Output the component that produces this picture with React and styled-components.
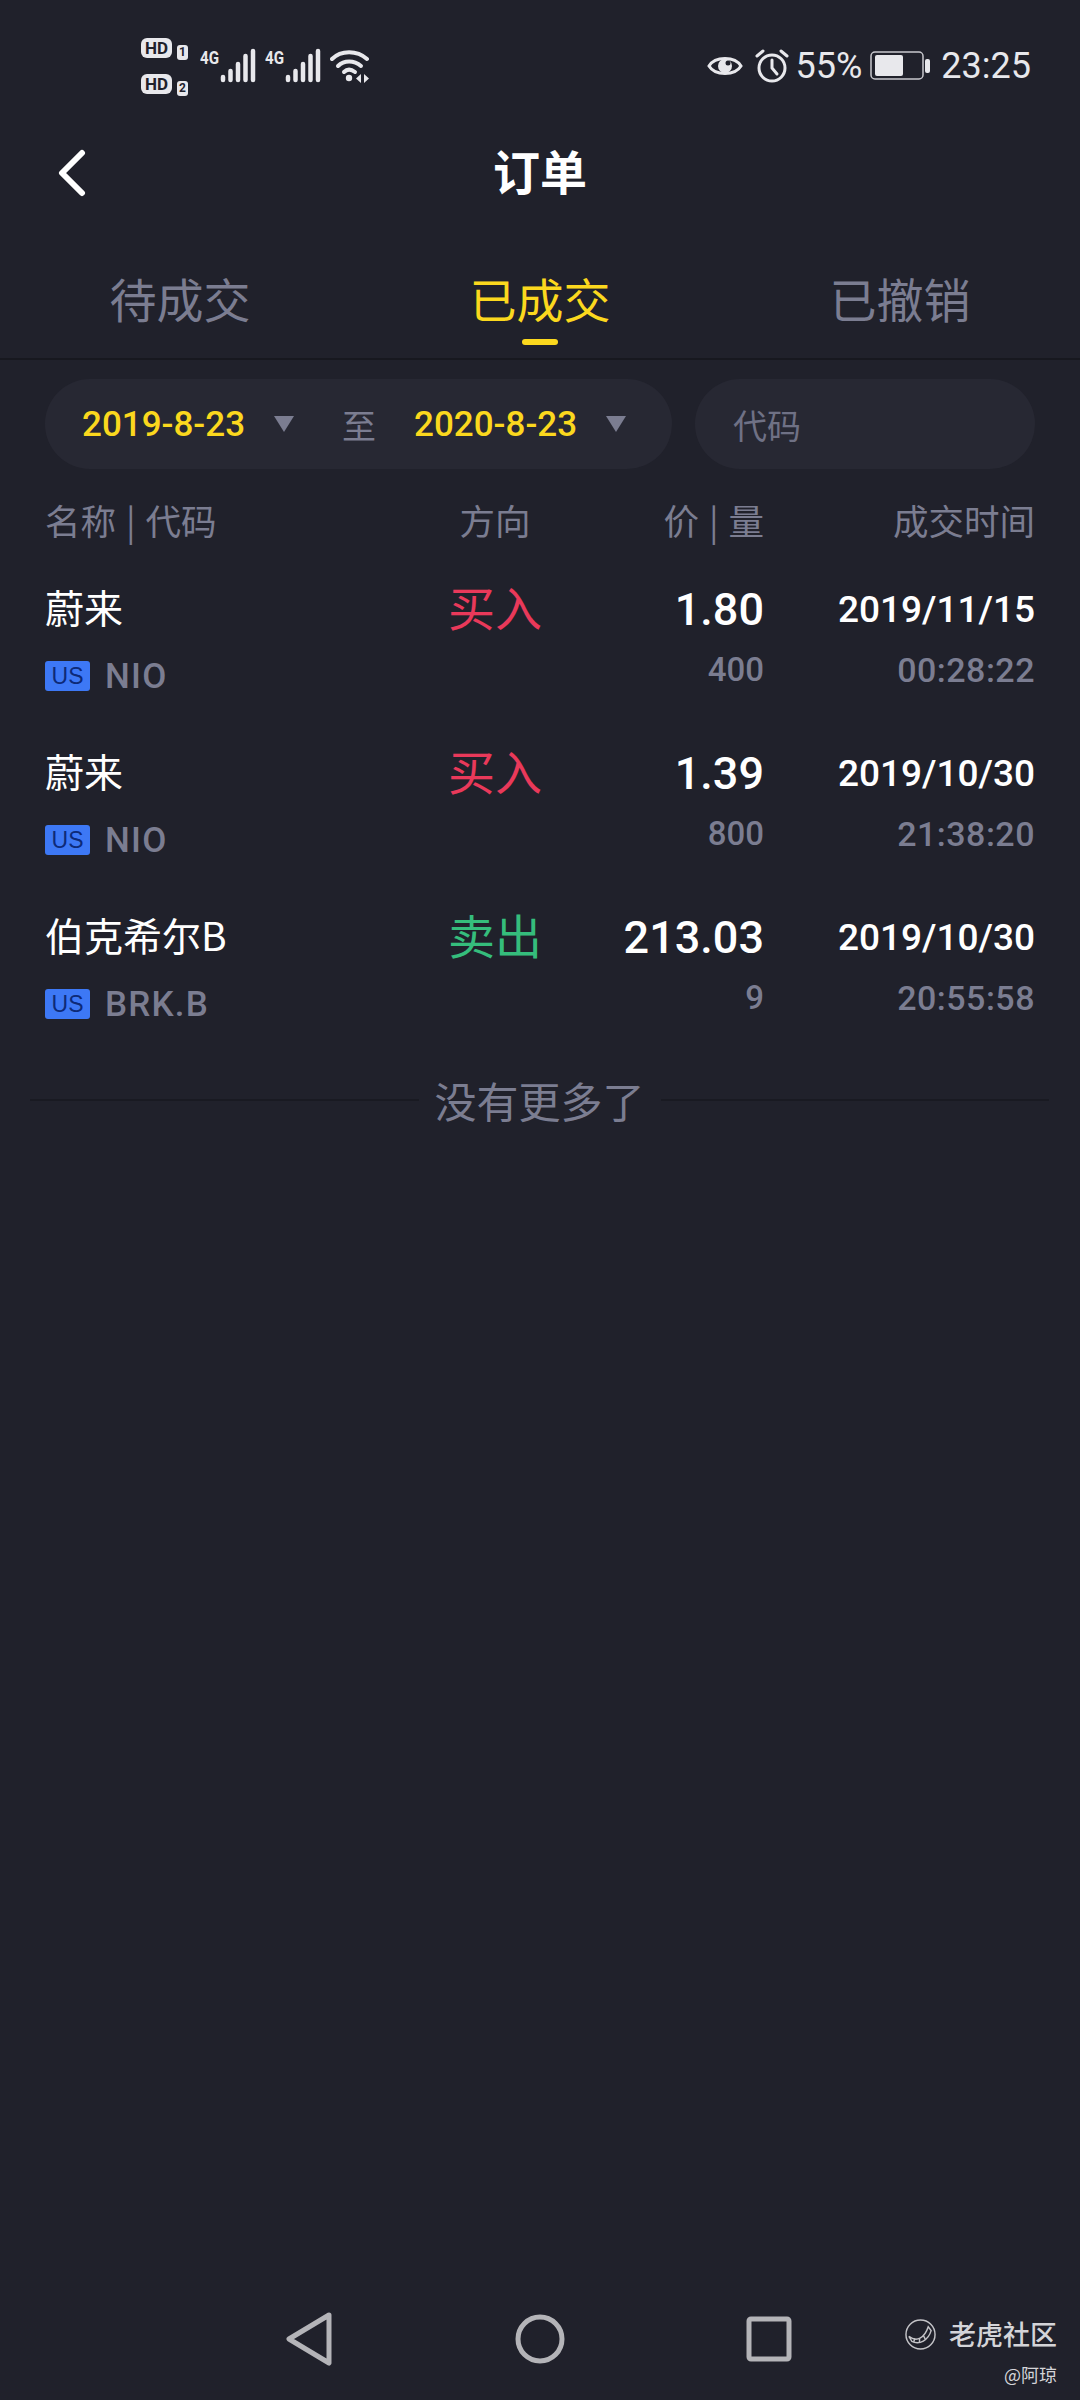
import React from "react";
import styled, { createGlobalStyle } from "styled-components";

const GlobalStyle = createGlobalStyle`
  html, body {
    margin: 0;
    padding: 0;
    background: #20212b;
  }
`;

const cjk = `"Noto Sans CJK SC", "Noto Sans", sans-serif`;
const digits = `Roboto, "Noto Sans CJK SC", sans-serif`;

const Page = styled.div`
  width: 1080px;
  height: 2400px;
  background: #20212b;
  color: #fff;
  font-family: ${cjk};
  display: flex;
  flex-direction: column;
  overflow: hidden;
`;

const StatusBar = styled.div`
  height: 130px;
  padding: 2px 49px 0 141px;
  display: flex;
  align-items: center;
  justify-content: space-between;
  box-sizing: border-box;
  color: #e8e8ec;
`;

const StatusGroup = styled.div`
  display: flex;
  align-items: center;
`;

const StatusText = styled.span`
  font-family: Roboto, sans-serif;
  font-size: 36px;
  margin: 0 ${(p) => p.$right || 0}px 0 ${(p) => p.$left || 0}px;
`;

const HdStack = styled.div`
  display: flex;
  flex-direction: column;
  gap: 16px;
  margin-right: 12px;
`;

const HdRow = styled.div`
  display: flex;
  align-items: flex-end;
  gap: 5px;
  font-family: Roboto, sans-serif;
  font-weight: 700;
  color: #20212b;
`;

const HdLabel = styled.span`
  width: 31px;
  height: 20px;
  border-radius: 6px;
  background: #e8e8ec;
  font-size: 17px;
  line-height: 20px;
  text-align: center;
`;

const HdSim = styled.span`
  width: 11px;
  height: 15px;
  margin-bottom: -2px;
  border-radius: 3px;
  background: #e8e8ec;
  font-size: 12px;
  line-height: 15px;
  text-align: center;
`;

const Header = styled.div`
  height: 86px;
  padding-left: 56px;
  display: flex;
  align-items: center;
  position: relative;
`;

const Title = styled.div`
  position: absolute;
  left: 0;
  right: 0;
  top: 10px;
  text-align: center;
  font-size: 47px;
  font-weight: 700;
  line-height: 60px;
`;

const Tabs = styled.div`
  height: 144px;
  box-sizing: border-box;
  display: grid;
  grid-template-columns: 360px 360px 360px;
  border-bottom: 2px solid #17181f;
`;

const Tab = styled.div`
  position: relative;
  text-align: center;
  font-size: 47px;
  line-height: 60px;
  padding-top: 52px;
  color: ${(p) => (p.$active ? "#fbd81e" : "#7b7d91")};
`;

const TabBar = styled.span`
  position: absolute;
  left: 162px;
  top: 123px;
  width: 36px;
  height: 6px;
  border-radius: 3px;
  background: #fbd81e;
`;

const Filters = styled.div`
  margin-top: 19px;
  padding: 0 45px;
  display: flex;
  gap: 23px;
`;

const Pill = styled.div`
  height: 90px;
  border-radius: 45px;
  background: #272833;
  display: flex;
  align-items: center;
  box-sizing: border-box;
`;

const DatePill = styled(Pill)`
  width: 627px;
  padding-left: 37px;
`;

const CodePill = styled(Pill)`
  width: 340px;
  padding-left: 38px;
  font-size: 34px;
  color: #6f7185;
`;

const DateText = styled.span`
  font-family: ${digits};
  font-size: 35px;
  font-weight: 500;
  color: #fbd81e;
`;

const Caret = styled.span`
  width: 0;
  height: 0;
  margin-left: 29px;
  border-left: 10px solid transparent;
  border-right: 10px solid transparent;
  border-top: 16px solid #7b7d91;
`;

const Until = styled.span`
  margin: 0 38px 0 48px;
  font-size: 34px;
  color: #7b7d91;
`;

const Grid = styled.div`
  display: grid;
  grid-template-columns: 355px 190px 174px 271px;
  padding: 0 45px;
`;

const HeadRow = styled(Grid)`
  margin-top: 25px;
  height: 50px;
  align-items: center;
  font-size: 35.5px;
  word-spacing: 2px;
  color: #7b7d91;
`;

const Rows = styled.div`
  margin-top: 38px;
`;

const Row = styled(Grid)`
  height: 164px;
`;

const Cell = styled.div`
  display: flex;
  flex-direction: column;
  align-items: ${(p) => p.$align || "flex-start"};
`;

const HeadCell = styled.div`
  text-align: ${(p) => p.$align || "left"};
`;

const Name = styled.div`
  font-size: 39px;
  line-height: 48px;
  color: #fff;
`;

const Ticker = styled.div`
  margin-top: 24px;
  display: flex;
  align-items: center;
  height: 44px;
`;

const Market = styled.span`
  width: 45px;
  height: 30px;
  border-radius: 3px;
  background: #3d78f5;
  color: #0d2a78;
  font-family: "Liberation Sans", sans-serif;
  font-size: 23px;
  line-height: 30px;
  text-align: center;
`;

const Code = styled.span`
  margin-left: 15px;
  font-family: ${digits};
  font-size: 35px;
  font-weight: 500;
  letter-spacing: 1.2px;
  color: #7b7d91;
`;

const Direction = styled.div`
  font-size: 47px;
  line-height: 48px;
  color: ${(p) => (p.$sell ? "#35bd7c" : "#e9395a")};
`;

const Price = styled.div`
  font-family: ${digits};
  font-size: 45px;
  font-weight: 500;
  line-height: 56px;
  color: #fff;
`;

const DateTime = styled.div`
  font-family: ${digits};
  font-size: 37px;
  font-weight: 500;
  line-height: 56px;
  color: #fff;
`;

const Small = styled.div`
  margin-top: 10px;
  height: 44px;
  line-height: 44px;
  font-family: ${digits};
  font-size: 34px;
  font-weight: 500;
  letter-spacing: 0.5px;
  color: #7b7d91;
`;

const Qty = styled(Small)`
  font-size: 33px;
  letter-spacing: 0;
`;

const EndNote = styled.div`
  margin-top: -2px;
  padding: 0 31px 0 30px;
  display: flex;
  align-items: center;
  gap: 16px;
  font-size: 42px;
  line-height: 56px;
  color: #7b7d91;
`;

const EndLine = styled.div`
  flex: 1;
  height: 2px;
  background: #191a22;
`;

const Spacer = styled.div`
  flex: 1;
`;

const NavBar = styled.div`
  height: 110px;
  margin-bottom: 6px;
  padding-left: 286px;
  display: flex;
  align-items: center;
  position: relative;
`;

const NavSlot = styled.div`
  width: ${(p) => p.$width}px;
  display: flex;
`;

const Watermark = styled.div`
  position: absolute;
  right: 23px;
  top: 30px;
  display: flex;
  flex-direction: column;
  align-items: flex-end;
  color: #d4d4d8;
`;

const WatermarkTop = styled.div`
  display: flex;
  align-items: center;
  gap: 13px;
  font-size: 27px;
  line-height: 40px;
  font-weight: 500;
`;

const WatermarkUser = styled.div`
  font-size: 18px;
  line-height: 24px;
  margin-top: 8px;
`;

const HdBadge = ({ n }) => (
  <HdRow>
    <HdLabel>HD</HdLabel>
    <HdSim>{n}</HdSim>
  </HdRow>
);

const Signal = () => (
  <svg width="65" height="46" viewBox="0 -6 65 46" display="block">
    <text x="0" y="15" fontSize="18" fontWeight="700" fontFamily="Roboto, sans-serif" fill="#e8e8ec" textLength="19" lengthAdjust="spacingAndGlyphs">4G</text>
    <g stroke="#e8e8ec" strokeWidth="4.5" strokeLinecap="round">
      <line x1="23" y1="28" x2="23" y2="31" />
      <line x1="30.5" y1="22" x2="30.5" y2="31" />
      <line x1="38" y1="15" x2="38" y2="31" />
      <line x1="45.5" y1="7" x2="45.5" y2="31" />
      <line x1="53" y1="2" x2="53" y2="31" />
    </g>
  </svg>
);

const Wifi = () => (
  <svg width="40" height="34" viewBox="0 0 40 34" fill="none" stroke="#e8e8ec" strokeWidth="4" strokeLinecap="round" display="block">
    <path d="M2 10C11 1 27 1 37 10" />
    <path d="M8 17C14 11 24 11 31 17" />
    <path d="M14 23C17 20 21 20 25 23" />
    <circle cx="19" cy="29" r="3.2" fill="#e8e8ec" stroke="none" />
    <path d="M31 25l-5 4.5 5 4.5zM34 25l5 4.5-5 4.5z" fill="#e8e8ec" stroke="none" />
  </svg>
);

const Eye = () => (
  <svg width="36" height="28" viewBox="0 0 36 28" fill="none" display="block">
    <path d="M2 14C8 4 28 4 34 14C28 24 8 24 2 14Z" stroke="#e8e8ec" strokeWidth="3" />
    <circle cx="18" cy="14" r="7" fill="#e8e8ec" />
    <circle cx="21" cy="11" r="2.5" fill="#20212b" />
  </svg>
);

const AlarmWrap = styled.span`
  display: flex;
  margin-left: 12px;
`;

const Alarm = () => (
  <AlarmWrap>
    <svg width="34" height="34" viewBox="0 0 34 34" fill="none" stroke="#e8e8ec" strokeWidth="3" strokeLinecap="round">
      <circle cx="17" cy="19" r="13" />
      <path d="M17 11v8l5 6" />
      <path d="M2 7l6-5M32 7l-6-5" />
    </svg>
  </AlarmWrap>
);

const Battery = () => (
  <svg width="60" height="30" viewBox="0 0 60 30" fill="none" display="block">
    <rect x="1" y="1" width="52" height="27" rx="4" stroke="#c8c8ce" strokeWidth="1.5" />
    <rect x="5" y="4" width="28" height="21" rx="2" fill="#e8e8ec" />
    <rect x="55" y="8" width="5" height="14" rx="2" fill="#e8e8ec" />
  </svg>
);

const BackIcon = () => (
  <svg width="32" height="48" viewBox="0 0 32 48" fill="none" stroke="#fff" strokeWidth="6" strokeLinecap="round" strokeLinejoin="round">
    <path d="M26 4L6 24l20 20" />
  </svg>
);

const TriangleIcon = () => (
  <svg width="46" height="54" viewBox="0 0 46 54" fill="none" stroke="#b4b4b8" strokeWidth="5" strokeLinejoin="round">
    <path d="M43 3L3 27l40 24z" />
  </svg>
);

const CircleIcon = () => (
  <svg width="50" height="50" viewBox="0 0 50 50" fill="none" stroke="#b4b4b8" strokeWidth="5">
    <circle cx="25" cy="25" r="22" />
  </svg>
);

const SquareIcon = () => (
  <svg width="46" height="46" viewBox="0 0 46 46" fill="none" stroke="#b4b4b8" strokeWidth="5" strokeLinejoin="round">
    <rect x="3" y="3" width="40" height="40" rx="2" />
  </svg>
);

const TigerIcon = () => (
  <svg width="31" height="31" viewBox="0 0 32 32" fill="none" stroke="#c4c4c8" strokeWidth="1.5">
    <circle cx="16" cy="16" r="15" />
    <path d="M4 18c8 6 16 2 20-10l3 4c-3 10-12 15-20 11z" />
    <path d="M10 20l-1 4M15 20l0 4M19 17l2 4" />
  </svg>
);

const orders = [
  { name: "蔚来", code: "NIO", side: "买入", price: "1.80", qty: "400", date: "2019/11/15", time: "00:28:22" },
  { name: "蔚来", code: "NIO", side: "买入", price: "1.39", qty: "800", date: "2019/10/30", time: "21:38:20" },
  { name: "伯克希尔B", code: "BRK.B", side: "卖出", sell: true, price: "213.03", qty: "9", date: "2019/10/30", time: "20:55:58" },
];

export default function App() {
  return (
    <Page>
      <GlobalStyle />
      <StatusBar>
        <StatusGroup>
          <HdStack>
            <HdBadge n="1" />
            <HdBadge n="2" />
          </HdStack>
          <Signal />
          <Signal />
          <Wifi />
        </StatusGroup>
        <StatusGroup>
          <Eye />
          <Alarm />
          <StatusText $left={7} $right={8}>55%</StatusText>
          <Battery />
          <StatusText $left={11}>23:25</StatusText>
        </StatusGroup>
      </StatusBar>
      <Header>
        <Title>订单</Title>
        <BackIcon />
      </Header>
      <Tabs>
        <Tab>待成交</Tab>
        <Tab $active>
          已成交
          <TabBar />
        </Tab>
        <Tab>已撤销</Tab>
      </Tabs>
      <Filters>
        <DatePill>
          <DateText>2019-8-23</DateText>
          <Caret />
          <Until>至</Until>
          <DateText>2020-8-23</DateText>
          <Caret />
        </DatePill>
        <CodePill>代码</CodePill>
      </Filters>
      <HeadRow>
        <HeadCell>名称 | 代码</HeadCell>
        <HeadCell $align="center">方向</HeadCell>
        <HeadCell $align="right">价 | 量</HeadCell>
        <HeadCell $align="right">成交时间</HeadCell>
      </HeadRow>
      <Rows>
        {orders.map((o, i) => (
          <Row key={i}>
            <Cell>
              <Name>{o.name}</Name>
              <Ticker>
                <Market>US</Market>
                <Code>{o.code}</Code>
              </Ticker>
            </Cell>
            <Cell $align="center">
              <Direction $sell={o.sell}>{o.side}</Direction>
            </Cell>
            <Cell $align="flex-end">
              <Price>{o.price}</Price>
              <Qty>{o.qty}</Qty>
            </Cell>
            <Cell $align="flex-end">
              <DateTime>{o.date}</DateTime>
              <Small>{o.time}</Small>
            </Cell>
          </Row>
        ))}
      </Rows>
      <EndNote>
        <EndLine />
        没有更多了
        <EndLine />
      </EndNote>
      <Spacer />
      <NavBar>
        <NavSlot $width={229}>
          <TriangleIcon />
        </NavSlot>
        <NavSlot $width={231}>
          <CircleIcon />
        </NavSlot>
        <NavSlot $width={46}>
          <SquareIcon />
        </NavSlot>
        <Watermark>
          <WatermarkTop>
            <TigerIcon />
            老虎社区
          </WatermarkTop>
          <WatermarkUser>@阿琼</WatermarkUser>
        </Watermark>
      </NavBar>
    </Page>
  );
}
